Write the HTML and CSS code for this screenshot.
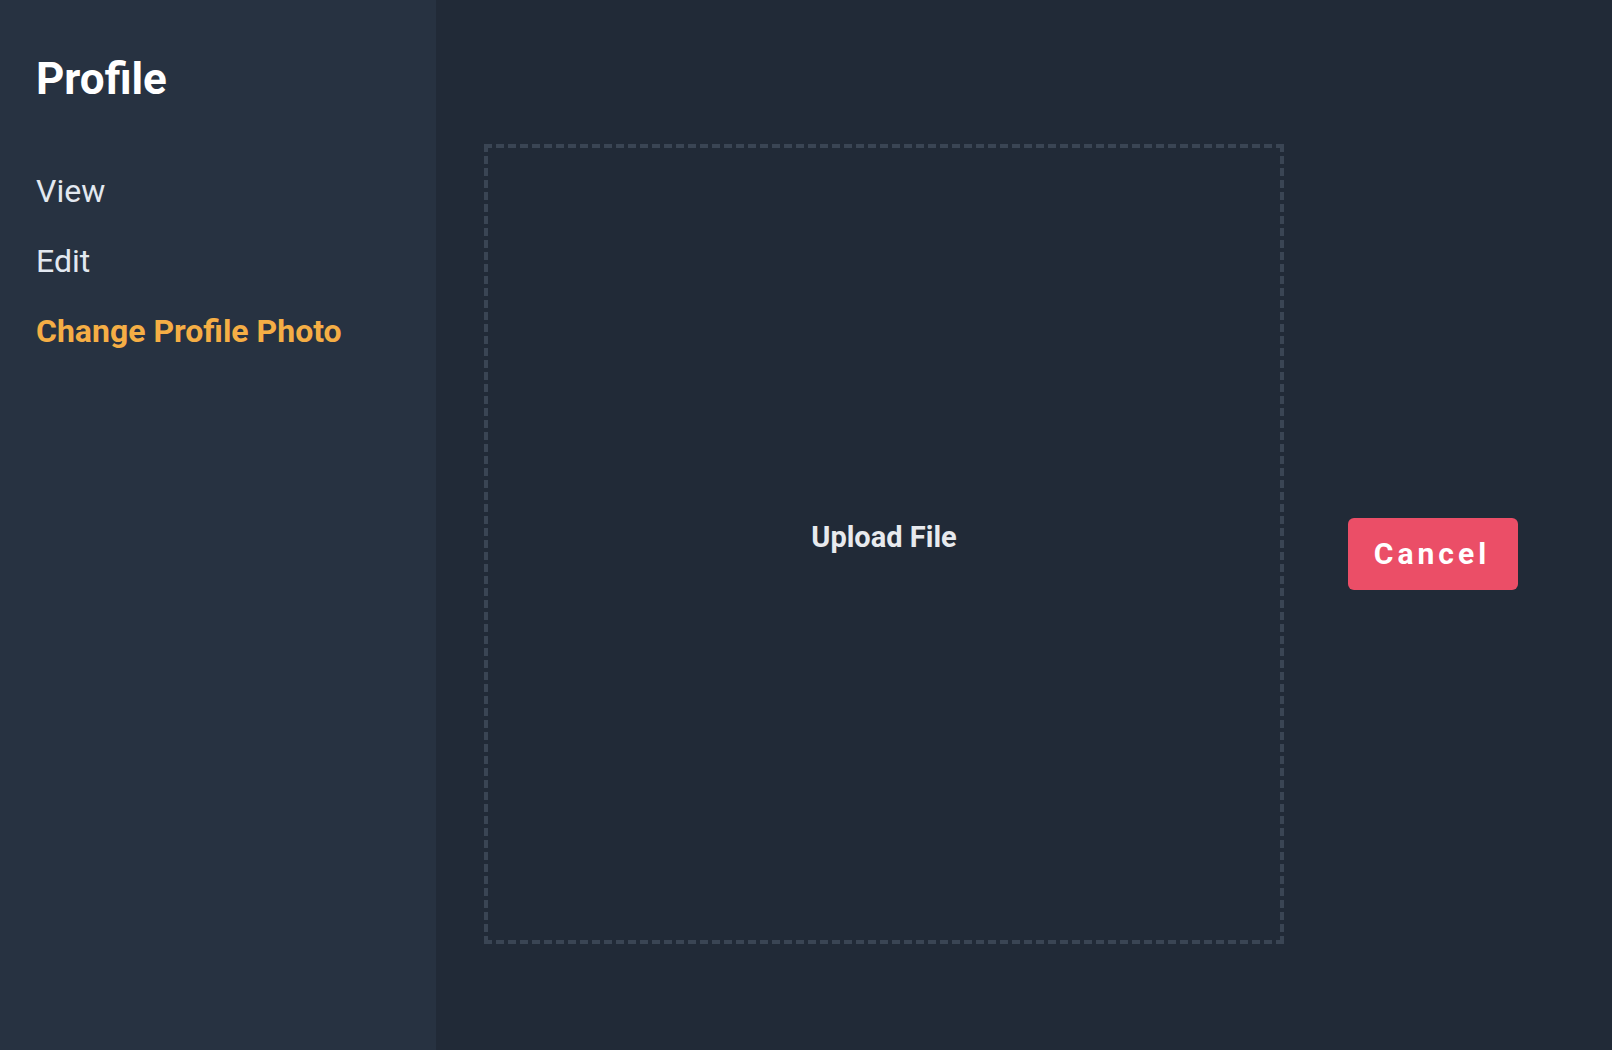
FILE: index.html
```html
<!DOCTYPE html>
<html lang="en">
<head>
<meta charset="utf-8">
<title>Profile</title>
<link rel="stylesheet" href="styles.css">
</head>
<body>
<div class="layout">
  <aside class="sidebar">
    <h1 class="title">Profile</h1>
    <nav class="nav">
      <a class="nav-item">View</a>
      <a class="nav-item">Edit</a>
      <a class="nav-item active">Change Profile Photo</a>
    </nav>
  </aside>
  <main class="main">
    <div class="dropzone"><span class="upload-label">Upload File</span></div>
    <button class="cancel">Cancel</button>
  </main>
</div>
</body>
</html>
```
FILE: styles.css
```css
* { box-sizing: border-box; }
html, body { margin: 0; height: 100%; }
body {
  font-family: Roboto, "Liberation Sans", sans-serif;
  background: #212a37;
}
.layout {
  display: flex;
  height: 1050px;
}
.sidebar {
  width: 436px;
  flex: none;
  background: #273241;
  padding: 53px 36px 0;
}
.title {
  margin: 0;
  font-size: 44px;
  font-weight: 700;
  color: #ffffff;
}
.nav {
  display: flex;
  flex-direction: column;
  gap: 32px;
  margin-top: 67px;
}
.nav-item {
  font-size: 32px;
  line-height: 38px;
  color: #e2e8f0;
  cursor: pointer;
}
.nav-item.active {
  color: #f5ae45;
  font-weight: 700;
}
.main {
  flex: 1;
  display: flex;
  align-items: flex-start;
  padding: 144px 0 0 48px;
}
.dropzone {
  width: 800px;
  height: 800px;
  border: 4px dashed #3a4554;
  display: flex;
  align-items: center;
  justify-content: center;
  padding-bottom: 15px;
}
.upload-label {
  font-size: 29px;
  font-weight: 700;
  color: #e8eaee;
}
.cancel {
  margin: 374px 0 0 64px;
  width: 170px;
  height: 72px;
  border: none;
  border-radius: 6px;
  background: #eb4e67;
  color: #ffffff;
  font-family: Roboto, "Liberation Sans", sans-serif;
  font-size: 30px;
  font-weight: 700;
  letter-spacing: 4px;
  padding: 0 2px 2px 0;
  cursor: pointer;
}
```
